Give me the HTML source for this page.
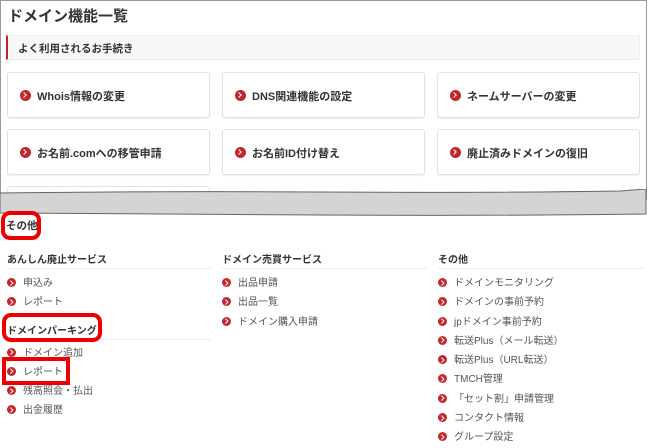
<!DOCTYPE html>
<html><head><meta charset="utf-8"><style>
*{margin:0;padding:0;box-sizing:border-box}
body{width:649px;height:445px;background:#fff;font-family:"Liberation Sans","Noto Sans CJK JP",sans-serif;color:#333;position:relative;overflow:hidden}
.abs{position:absolute}
.top{left:0;top:0;width:647px;height:200px;border:1px solid #999;border-bottom:none;background:#fff}
.title{left:8px;top:5px;font-size:15px;font-weight:bold;color:#333}
.sub{left:6px;top:35px;width:634px;height:25px;background:#f8f8f8;border:1px solid #eee;border-left:2px solid #c0272d;font-size:10.5px;font-weight:bold;padding:5px 0 0 10px}
.card{width:203px;height:46px;border:1px solid #e2e2e2;border-radius:3px;background:#fff;box-shadow:0 1px 1px rgba(0,0,0,.08);font-size:11px;font-weight:bold;padding:15px 0 0 12px;white-space:nowrap}
.ic{display:inline-block;width:11px;height:11px;border-radius:50%;background:#c0272d;vertical-align:-1px;margin-right:6px;position:relative}
.ic:after{content:"";position:absolute;left:2px;top:3px;width:3px;height:3px;border-top:1.6px solid #fff;border-right:1.6px solid #fff;transform:rotate(45deg)}
.s{width:9px;height:9px;margin-right:7px}
.s:after{left:1.5px;top:2.5px;width:2.5px;height:2.5px;border-width:1.3px}
.band{left:0;top:189px;width:649px;height:28px}
.h{font-size:10px;font-weight:bold;color:#333;width:205px;border-bottom:1px solid #eee;height:18px}
.it{font-size:10px;color:#555;height:19.3px;white-space:nowrap}
.rb{border:4px solid #e00;border-radius:9px}
</style></head><body>
<div class="abs top"></div>
<div class="abs title">ドメイン機能一覧</div>
<div class="abs sub">よく利用されるお手続き</div>
<div class="abs card" style="left:7px;top:72px"><span class="ic"></span>Whois情報の変更</div>
<div class="abs card" style="left:222px;top:72px"><span class="ic"></span>DNS関連機能の設定</div>
<div class="abs card" style="left:437px;top:72px"><span class="ic"></span>ネームサーバーの変更</div>
<div class="abs card" style="left:7px;top:129px"><span class="ic"></span>お名前.comへの移管申請</div>
<div class="abs card" style="left:222px;top:129px"><span class="ic"></span>お名前ID付け替え</div>
<div class="abs card" style="left:437px;top:129px"><span class="ic"></span>廃止済みドメインの復旧</div>
<div class="abs card" style="left:7px;top:186px;height:8px"></div>
<svg class="abs band" width="649" height="28" viewBox="0 0 649 28"><path d="M0 4 Q150 2 320 3 T620 2 L646 0 L646 25 Q500 27 320 26 T0 24 Z" fill="#d4d4d4" stroke="#666" stroke-width="1"/></svg>
<div class="abs rb" style="left:1px;top:211px;width:40px;height:29px"></div>
<div class="abs" style="left:6px;top:218px;font-size:10.5px;font-weight:bold">その他</div>

<div class="abs" style="left:7px;top:251px">
<div class="h">あんしん廃止サービス</div>
<div style="height:5px"></div>
<div class="it"><span class="ic s"></span>申込み</div>
<div class="it"><span class="ic s"></span>レポート</div>
<div style="height:9px"></div>
<div class="h">ドメインパーキング</div>
<div style="height:4px"></div>
<div class="it"><span class="ic s"></span>ドメイン追加</div>
<div class="it"><span class="ic s"></span>レポート</div>
<div class="it"><span class="ic s"></span>残高照会・払出</div>
<div class="it"><span class="ic s"></span>出金履歴</div>
</div>
<div class="abs rb" style="left:2px;top:313px;width:100px;height:29px"></div>
<div class="abs" style="left:2px;top:357px;width:68px;height:28px;border:4px solid #e00"></div>

<div class="abs" style="left:222px;top:251px">
<div class="h">ドメイン売買サービス</div>
<div style="height:5px"></div>
<div class="it"><span class="ic s"></span>出品申請</div>
<div class="it"><span class="ic s"></span>出品一覧</div>
<div class="it"><span class="ic s"></span>ドメイン購入申請</div>
</div>

<div class="abs" style="left:438px;top:251px">
<div class="h">その他</div>
<div style="height:5px"></div>
<div class="it"><span class="ic s"></span>ドメインモニタリング</div>
<div class="it"><span class="ic s"></span>ドメインの事前予約</div>
<div class="it"><span class="ic s"></span>jpドメイン事前予約</div>
<div class="it"><span class="ic s"></span>転送Plus（メール転送）</div>
<div class="it"><span class="ic s"></span>転送Plus（URL転送）</div>
<div class="it"><span class="ic s"></span>TMCH管理</div>
<div class="it"><span class="ic s"></span>「セット割」申請管理</div>
<div class="it"><span class="ic s"></span>コンタクト情報</div>
<div class="it"><span class="ic s"></span>グループ設定</div>
</div>
</body></html>
